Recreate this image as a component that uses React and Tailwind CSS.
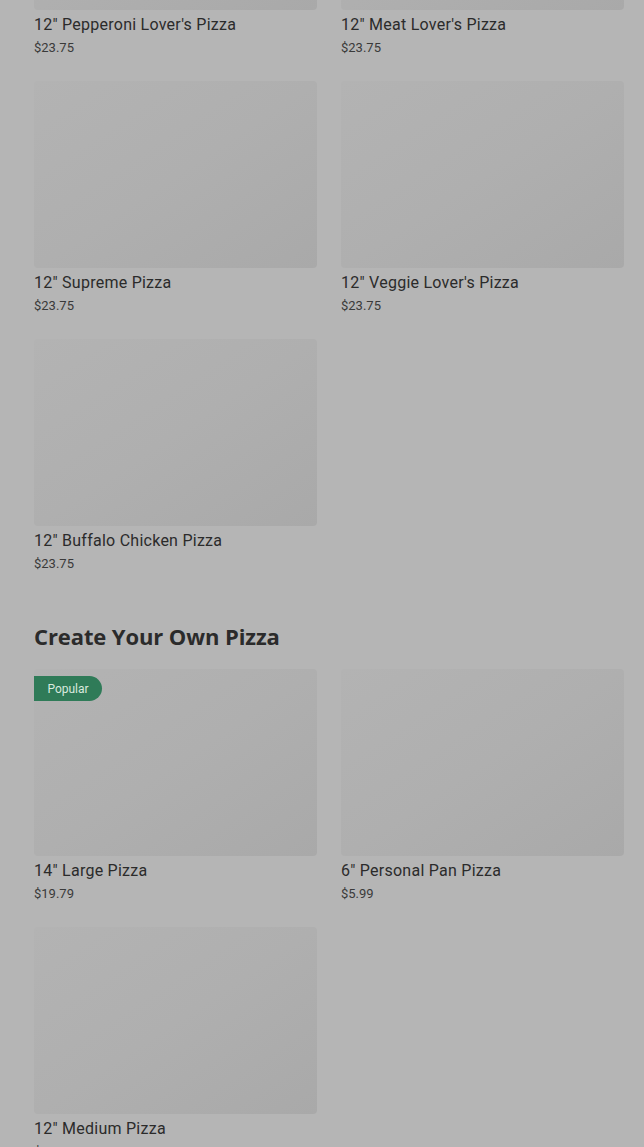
import React from "react";

const specialty = [
  { name: '12" Pepperoni Lover\'s Pizza', price: "$23.75" },
  { name: '12" Meat Lover\'s Pizza', price: "$23.75" },
  { name: '12" Supreme Pizza', price: "$23.75" },
  { name: '12" Veggie Lover\'s Pizza', price: "$23.75" },
  { name: '12" Buffalo Chicken Pizza', price: "$23.75" },
];

const cyo = [
  { name: '14" Large Pizza', price: "$19.79", badge: "Popular" },
  { name: '6" Personal Pan Pizza', price: "$5.99" },
  { name: '12" Medium Pizza', price: "$17.97" },
];

function Card({ item }) {
  return (
    <div className="flex flex-col">
      <div className="relative h-[187px] rounded-[4px] bg-gradient-to-br from-[#b3b3b3] via-[#afafaf] to-[#a9a9a9]">
        {item.badge && (
          <span className="absolute left-0 top-[7px] flex h-[25px] w-[68px] items-center justify-center rounded-r-full bg-[#2f7b58] text-[12px] text-[#d9e9df]">
            {item.badge}
          </span>
        )}
      </div>
      <div className="mt-[3px] text-[16px] leading-[24px] tracking-[0.25px] text-[#2b2b2b]">{item.name}</div>
      <div className="mt-[1px] text-[13px] leading-[20px] text-[#3a3a3a]">{item.price}</div>
    </div>
  );
}

export default function App() {
  return (
    <div
      className="h-[1147px] overflow-hidden bg-[#b5b5b5]"
      style={{ fontFamily: "Roboto, 'Liberation Sans', sans-serif" }}
    >
      <div className="mt-[-177px] pl-[34px] pr-[20px]">
        <div className="grid grid-cols-2 gap-x-[24px] gap-y-[23px]">
          {specialty.map((it, i) => (
            <Card key={i} item={it} />
          ))}
        </div>
        <h2
          className="mt-[46px] mb-[17px] text-[22px] font-bold leading-[32px] tracking-[-0.1px] text-[#2b2b2b]"
          style={{ fontFamily: "'Open Sans', Lato, sans-serif" }}
        >
          Create Your Own Pizza
        </h2>
        <div className="grid grid-cols-2 gap-x-[24px] gap-y-[23px]">
          {cyo.map((it, i) => (
            <Card key={i} item={it} />
          ))}
        </div>
      </div>
    </div>
  );
}
